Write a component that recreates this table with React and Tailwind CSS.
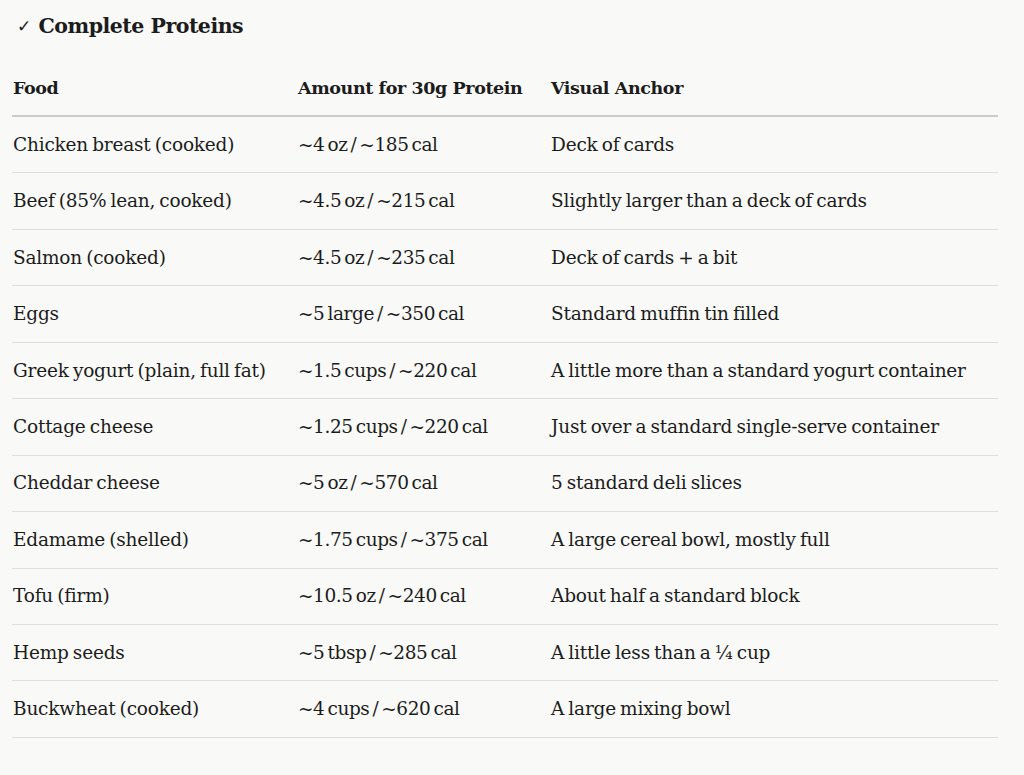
import React from "react";

const rows = [
  ["Chicken breast (cooked)", "~4 oz / ~185 cal", "Deck of cards"],
  ["Beef (85% lean, cooked)", "~4.5 oz / ~215 cal", "Slightly larger than a deck of cards"],
  ["Salmon (cooked)", "~4.5 oz / ~235 cal", "Deck of cards + a bit"],
  ["Eggs", "~5 large / ~350 cal", "Standard muffin tin filled"],
  ["Greek yogurt (plain, full fat)", "~1.5 cups / ~220 cal", "A little more than a standard yogurt container"],
  ["Cottage cheese", "~1.25 cups / ~220 cal", "Just over a standard single-serve container"],
  ["Cheddar cheese", "~5 oz / ~570 cal", "5 standard deli slices"],
  ["Edamame (shelled)", "~1.75 cups / ~375 cal", "A large cereal bowl, mostly full"],
  ["Tofu (firm)", "~10.5 oz / ~240 cal", "About half a standard block"],
  ["Hemp seeds", "~5 tbsp / ~285 cal", "A little less than a ¼ cup"],
  ["Buckwheat (cooked)", "~4 cups / ~620 cal", "A large mixing bowl"],
];

const App = () => {
  return (
    <div className="min-h-[775px] bg-[#f9f9f7] text-[#1c1c1c] font-['DejaVu_Serif',serif]">
      <div className="w-[998px] pl-[12px] pt-[12px]">
        <h2 className="flex items-center text-[20.5px] font-bold leading-[28px] tracking-[-0.5px]">
          <span className="ml-[5px] mr-[8px] text-[17px] font-normal">✓</span>
          Complete Proteins
        </h2>

        <div className="mt-[21px] grid h-[56px] grid-cols-[286px_253px_1fr] items-center border-b-2 border-[#cbcbc9] text-[17.5px] font-bold tracking-[-0.4px]">
          <div className="pl-[1px]">Food</div>
          <div>Amount for 30g Protein</div>
          <div>Visual Anchor</div>
        </div>

        {rows.map((r) => (
          <div
            key={r[0]}
            className="grid h-[56.45px] grid-cols-[286px_253px_1fr] items-center border-b border-[#dededc] text-[18.5px] tracking-[-0.2px] [word-spacing:-1.5px]"
          >
            <div className="pl-[1px]">{r[0]}</div>
            <div className="tracking-[-0.4px] [word-spacing:-2.5px]">{r[1]}</div>
            <div>{r[2]}</div>
          </div>
        ))}
      </div>
    </div>
  );
};

export default App;
